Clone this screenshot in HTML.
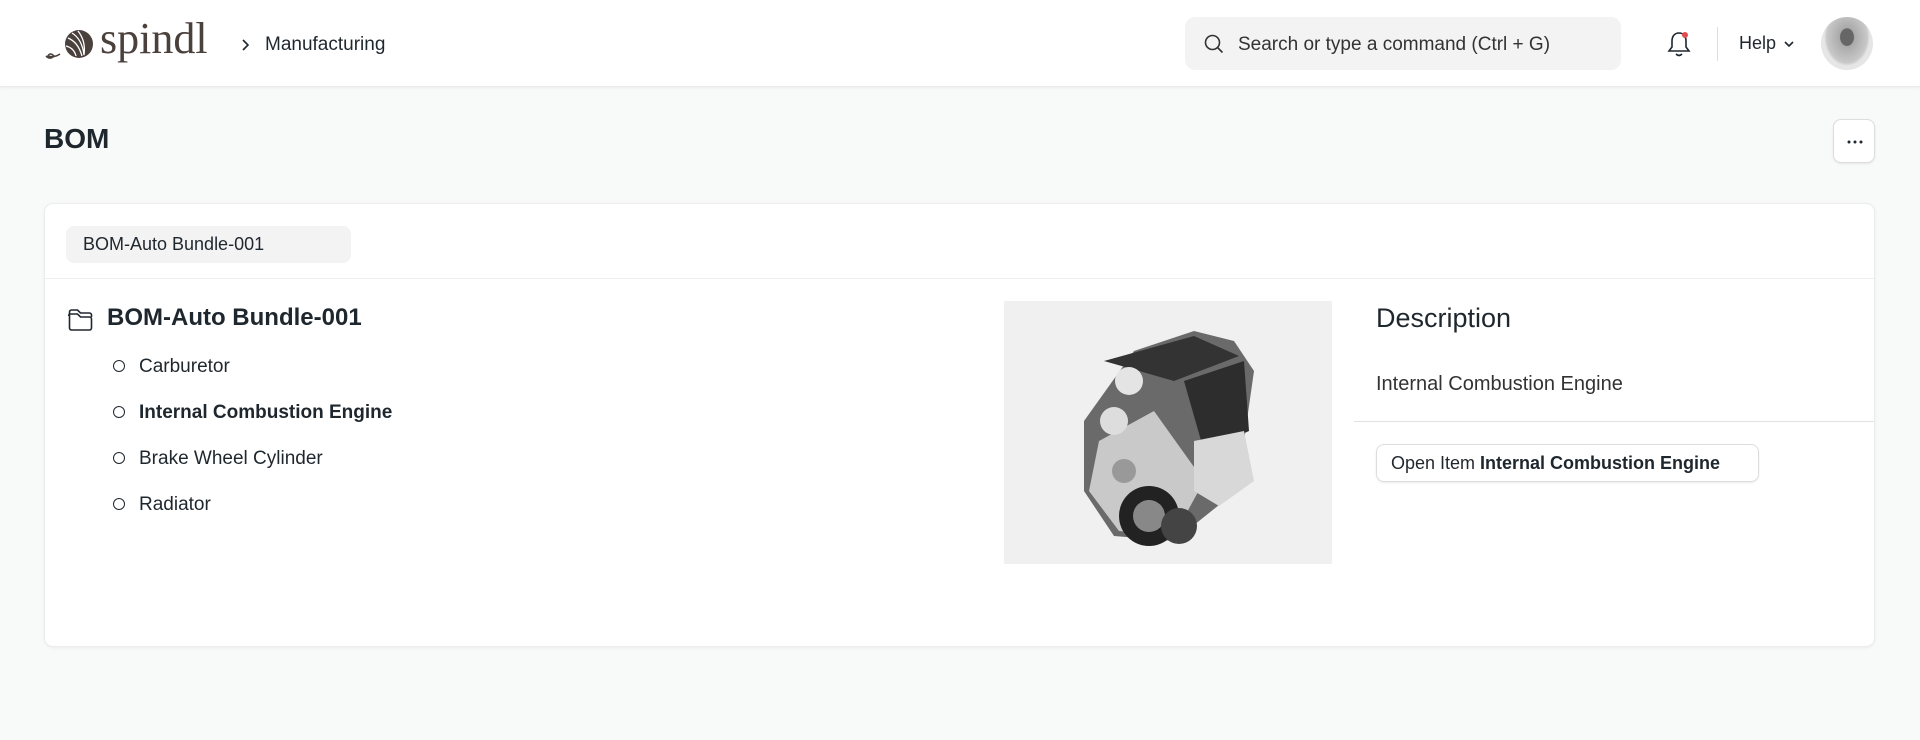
<!DOCTYPE html>
<html><head><meta charset="utf-8"><style>
*{box-sizing:border-box;margin:0;padding:0}
body{width:1920px;height:740px;background:#f8f9f9;font-family:"Liberation Sans",sans-serif;color:#1f272e;position:relative;overflow:hidden}
.nav{position:absolute;left:0;top:0;width:1920px;height:87px;background:#fff;border-bottom:1px solid #e8eaeb;box-shadow:0 1px 3px rgba(0,0,0,.05)}
.abs{position:absolute}
.c{display:inline-block;width:12px;height:12px;border:1.6px solid #1f272e;border-radius:50%;margin-right:14px}
</style></head><body>
<div class="nav">
  <svg class="abs" style="left:44px;top:26px" width="52" height="36" viewBox="0 0 52 36">
    <path d="M2 30 q4 4 8 0 q-4 -4 -6 0 q6 2 12 -2" fill="none" stroke="#4a413d" stroke-width="1.6"/>
    <circle cx="35" cy="18" r="14" fill="#4a413d"/>
    <path d="M24 12 q10 4 14 18 M28 7 q10 6 12 22 M34 5 q8 10 6 24 M22 20 q8 2 10 10" fill="none" stroke="#fff" stroke-width="1.3"/>
  </svg>
  <div class="abs" style="left:100px;top:17px;font-family:'Liberation Serif',serif;font-size:44px;color:#4a413d;line-height:1">spindl</div>
  <svg class="abs" style="left:240px;top:38px" width="12" height="14" viewBox="0 0 12 14"><path d="M3 2 l5 5 l-5 5" fill="none" stroke="#1f272e" stroke-width="1.6"/></svg>
  <div class="abs" style="left:265px;top:34px;font-size:19px;color:#1f272e">Manufacturing</div>
  <div class="abs" style="left:1185px;top:17px;width:436px;height:53px;background:#f3f3f4;border-radius:10px"></div>
  <svg class="abs" style="left:1203px;top:33px" width="22" height="22" viewBox="0 0 22 22"><circle cx="9.5" cy="9.5" r="7" fill="none" stroke="#333" stroke-width="1.6"/><path d="M14.5 14.5 l5 5" stroke="#333" stroke-width="1.6"/></svg>
  <div class="abs" style="left:1238px;top:34px;font-size:19px;color:#333">Search or type a command (Ctrl + G)</div>
  <svg class="abs" style="left:1666px;top:30px" width="26" height="28" viewBox="0 0 26 28"><path d="M13 3 c-5 0 -7 4 -7 8 v6 l-3 4 h20 l-3 -4 v-6 c0 -4 -2 -8 -7 -8z M10 24 q3 3 6 0" fill="none" stroke="#1f272e" stroke-width="1.6"/><circle cx="19" cy="5" r="3" fill="#e24c4c"/></svg>
  <div class="abs" style="left:1717px;top:27px;width:1px;height:34px;background:#ddd"></div>
  <div class="abs" style="left:1739px;top:33px;font-size:18px;color:#1f272e">Help</div>
  <svg class="abs" style="left:1783px;top:39px" width="12" height="10" viewBox="0 0 12 10"><path d="M2 3 l4 4 l4 -4" fill="none" stroke="#1f272e" stroke-width="1.6"/></svg>
  <div class="abs" style="left:1821px;top:17px;width:52px;height:53px;border-radius:50%;background:radial-gradient(ellipse at 50% 38%,#666 0 18%,#aaa 20%,#c8c8c8 55%,#e6e6e6 62%)"></div>
</div>
<div class="abs" style="left:44px;top:123px;font-size:28px;font-weight:bold;color:#1f272e">BOM</div>
<div class="abs" style="left:1833px;top:119px;width:42px;height:44px;background:#fff;border:1px solid #ddd;border-radius:8px;box-shadow:0 1px 2px rgba(0,0,0,.08)">
  <svg class="abs" style="left:13px;top:20px" width="16" height="4"><circle cx="2" cy="2" r="1.5" fill="#1f272e"/><circle cx="8" cy="2" r="1.5" fill="#1f272e"/><circle cx="14" cy="2" r="1.5" fill="#1f272e"/></svg>
</div>
<div class="abs" style="left:44px;top:203px;width:1831px;height:444px;background:#fff;border:1px solid #ececec;border-radius:9px;box-shadow:0 1px 3px rgba(0,0,0,.05)">
  <div class="abs" style="left:21px;top:22px;width:285px;height:37px;background:#f3f3f4;border-radius:8px;font-size:18px;line-height:37px;padding-left:17px;color:#1f272e">BOM-Auto Bundle-001</div>
  <div class="abs" style="left:0;top:74px;width:1829px;height:1px;background:#ededed"></div>
  <svg class="abs" style="left:23px;top:104px" width="26" height="24" viewBox="0 0 26 24"><path d="M1.5 4 a2 2 0 0 1 2 -2 h6 l3 3 h9 a2 2 0 0 1 2 2 v2 M1.5 4 v16 a2 2 0 0 0 2 2 h18 a2 2 0 0 0 2 -2 v-9 a2 2 0 0 0 -2 -2 h-9 l-3 -3 h-7 a2 2 0 0 0 -2 2" fill="none" stroke="#1f272e" stroke-width="1.6"/></svg>
  <div class="abs" style="left:62px;top:100px;font-size:24px;font-weight:bold">BOM-Auto Bundle-001</div>
  <div class="abs" style="left:68px;top:140px;font-size:19px;line-height:46px">
    <div><span class="c"></span>Carburetor</div>
    <div style="font-weight:bold"><span class="c"></span>Internal Combustion Engine</div>
    <div><span class="c"></span>Brake Wheel Cylinder</div>
    <div><span class="c"></span>Radiator</div>
  </div>
  <svg class="abs" style="left:959px;top:97px" width="328" height="263" viewBox="0 0 328 263">
    <rect width="328" height="263" fill="#f0f0f0"/>
    <path d="M80 120 L130 50 L190 30 L230 40 L250 70 L240 140 L220 200 L170 240 L110 235 L80 190 Z" fill="#6a6a6a"/>
    <path d="M100 60 L190 35 L235 55 L170 80 Z" fill="#333"/>
    <path d="M180 80 L240 60 L245 130 L200 150 Z" fill="#2d2d2d"/>
    <path d="M95 140 L150 110 L200 180 L170 235 L115 230 L85 190 Z" fill="#c9c9c9"/>
    <circle cx="145" cy="215" r="30" fill="#222"/><circle cx="145" cy="215" r="16" fill="#888"/>
    <circle cx="175" cy="225" r="18" fill="#444"/>
    <path d="M190 140 L240 130 L250 180 L215 205 L190 190 Z" fill="#d8d8d8"/>
    <circle cx="110" cy="120" r="14" fill="#ddd"/><circle cx="125" cy="80" r="14" fill="#e4e4e4"/>
    <circle cx="120" cy="170" r="12" fill="#999"/>
  </svg>
  <div class="abs" style="left:1331px;top:99px;font-size:27px;color:#1f272e">Description</div>
  <div class="abs" style="left:1331px;top:169px;font-size:20px;color:#333">Internal Combustion Engine</div>
  <div class="abs" style="left:1309px;top:217px;width:520px;height:1px;background:#e2e2e2"></div>
  <div class="abs" style="left:1331px;top:240px;width:383px;height:38px;border:1px solid #ddd;border-radius:8px;box-shadow:0 1px 2px rgba(0,0,0,.08);font-size:18px;line-height:36px;padding-left:14px">Open Item <b>Internal Combustion Engine</b></div>
</div>
</body></html>
